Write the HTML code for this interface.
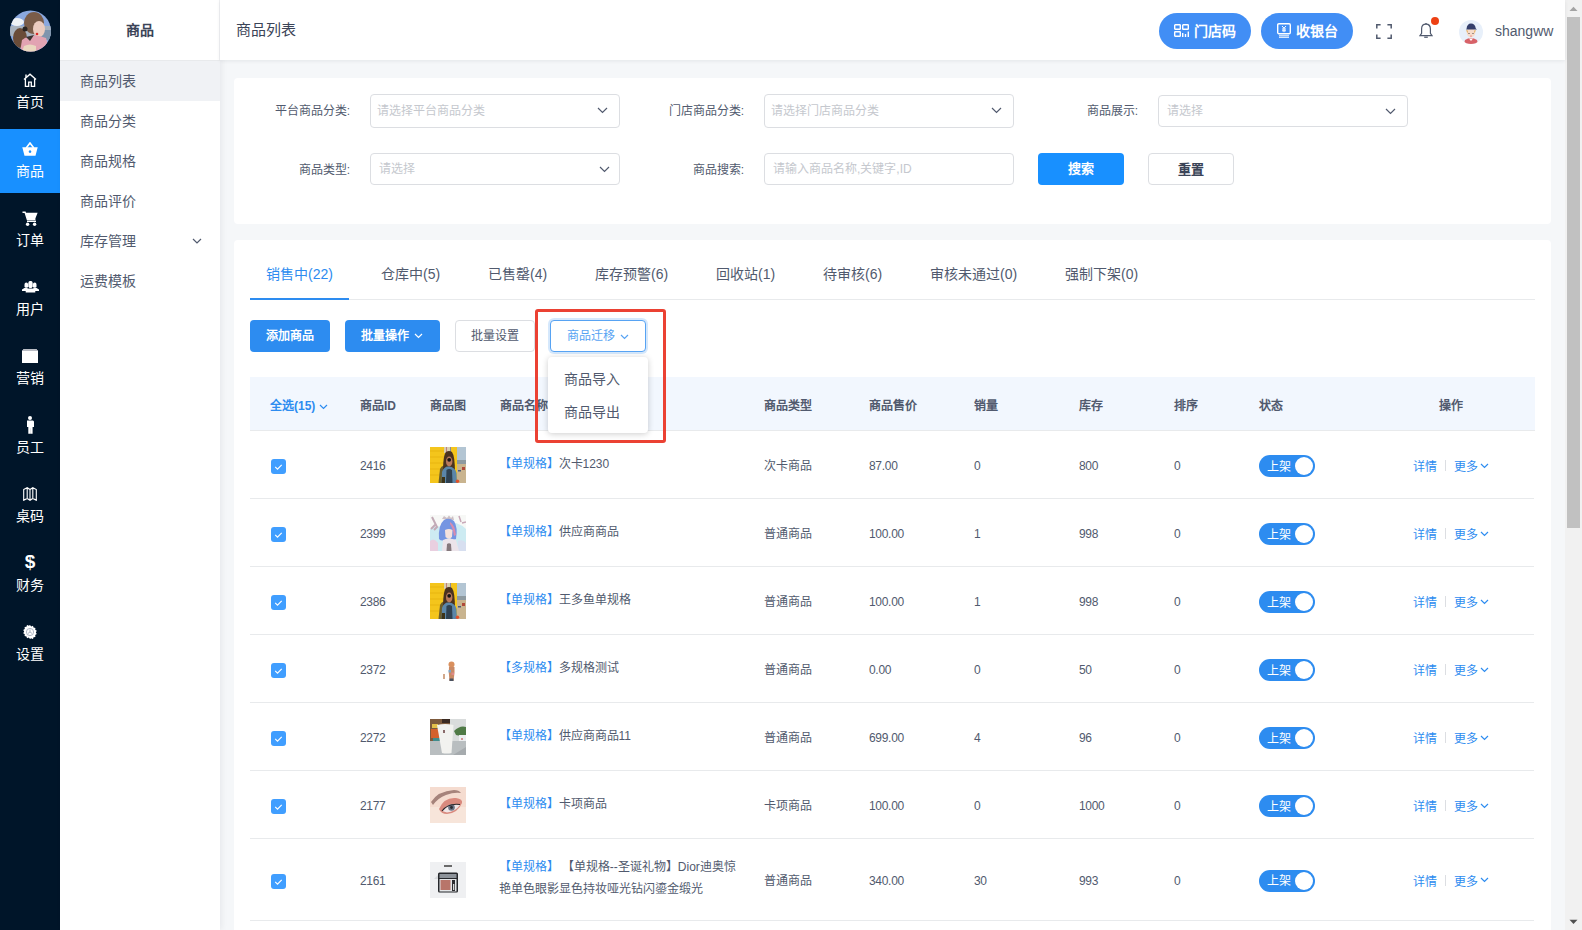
<!DOCTYPE html><html lang="zh-CN"><head><meta charset="utf-8"><style>
*{margin:0;padding:0;box-sizing:border-box}
html,body{width:1582px;height:930px;overflow:hidden;background:#f5f7f9}
body{font-family:"Liberation Sans",sans-serif;font-size:12px;color:#515a6e;position:relative}
.a{position:absolute}
.t{position:absolute;white-space:nowrap}
#side1{left:0;top:0;width:60px;height:930px;background:#001529}
.mtx{position:absolute;left:0;width:60px;text-align:center;color:#fff;font-size:14px;line-height:20px;height:20px}
#side2{left:60px;top:0;width:160px;height:930px;background:#fff;box-shadow:2px 0 6px rgba(0,21,41,.06);z-index:2}
.s2it{position:absolute;left:0;width:160px;height:40px;line-height:40px;padding-left:20px;font-size:14px;color:#515a6e}
#header{left:220px;top:0;width:1345px;height:60px;background:#fff;box-shadow:0 1px 4px rgba(0,21,41,.08);z-index:3}
.card{position:absolute;background:#fff;border-radius:4px}
.lbl{position:absolute;font-size:12px;color:#515a6e;line-height:16px;white-space:nowrap}
.sel{position:absolute;border:1px solid #dcdee2;border-radius:4px;background:#fff}
.ph{position:absolute;font-size:12px;color:#c5c8ce;line-height:16px;white-space:nowrap}
.tab{position:absolute;font-size:14px;line-height:20px;color:#515a6e;white-space:nowrap}
.cell{position:absolute;font-size:12px;line-height:16px;color:#515a6e;white-space:nowrap}
.hcell{position:absolute;font-size:12px;line-height:16px;color:#515a6e;font-weight:bold;white-space:nowrap}
</style></head><body>
<div id="side1" class="a">
<svg class="a" style="left:10px;top:10px" width="41" height="42" viewBox="0 0 41 42">
<defs><clipPath id="av"><circle cx="20.5" cy="21" r="20.5"/></clipPath></defs>
<g clip-path="url(#av)">
<rect width="41" height="42" fill="#8aa8de"/>
<ellipse cx="7" cy="12" rx="7" ry="4" fill="#eef2f6"/>
<rect x="0" y="16" width="41" height="10" fill="#a9b3bf"/>
<rect x="30" y="20" width="11" height="10" fill="#7f95ad"/>
<ellipse cx="24" cy="13" rx="10" ry="11" fill="#7a5c48"/>
<ellipse cx="29" cy="19" rx="6" ry="8" fill="#ecccbf"/>
<circle cx="27" cy="24" r="1.3" fill="#d82a2a"/>
<ellipse cx="10" cy="28" rx="7" ry="10" fill="#6a4c38"/>
<circle cx="15" cy="19" r="2.5" fill="#2a2522"/>
<path d="M12 30 Q22 22 36 28 L40 42 H10z" fill="#e2a3b2"/>
<path d="M14 36 Q20 33 26 36 L26 42 H12z" fill="#ead8c0"/>
<path d="M16 27 L24 25 L20 31z" fill="#3a3430"/>
</g></svg>
<div class="a" style="left:0;top:129px;width:60px;height:64px;background:#1890ff"></div>
<div class="mtx" style="top:91.5px">首页</div>
<div class="mtx" style="top:160.5px">商品</div>
<div class="mtx" style="top:229.5px">订单</div>
<div class="mtx" style="top:298.5px">用户</div>
<div class="mtx" style="top:367.5px">营销</div>
<div class="mtx" style="top:436.5px">员工</div>
<div class="mtx" style="top:505.5px">桌码</div>
<div class="mtx" style="top:574.5px">财务</div>
<div class="mtx" style="top:643.5px">设置</div>
<svg class="a" style="left:23px;top:73px" width="14" height="14" viewBox="0 0 14 14"><path d="M1 6.6 L7 1.2 L13 6.6" fill="none" stroke="#fff" stroke-width="1.4"/><path d="M2.3 1.6h1.4v3.2h-1.4z" fill="#fff"/><path d="M2.4 6v7.3h3.3V9.2h2.6v4.1h3.3V6" fill="none" stroke="#fff" stroke-width="1.3"/></svg>
<svg class="a" style="left:22px;top:142px" width="16" height="14" viewBox="0 0 16 14"><path d="M4.2 6 L8 1 L11.8 6" fill="none" stroke="#fff" stroke-width="1.6"/><path d="M0.3 5.2h15.4l-2.2 8.6h-11z M8 8.3a1.3 1.3 0 1 0 0.01 0z" fill="#fff" fill-rule="evenodd"/></svg>
<svg class="a" style="left:22px;top:211px" width="16" height="15" viewBox="0 0 16 15"><path d="M0.5 1.3h2.6l2.3 7.2h8" fill="none" stroke="#fff" stroke-width="1.4"/><path d="M3.6 1.8h12l-2.6 6.6h-7.6z" fill="#fff"/><path d="M5 10.3h9" stroke="#fff" stroke-width="1.4"/><circle cx="5.6" cy="13.2" r="1.7" fill="#fff"/><circle cx="12.6" cy="13.2" r="1.7" fill="#fff"/></svg>
<svg class="a" style="left:22px;top:281px" width="17" height="12" viewBox="0 0 17 12"><path d="M2.5 3.5a1.8 2 0 0 1 3.6 0v2.6l-1 .7h-1.6l-1-.7z M0 10h7.5v-1.5l-2.4-1.5h-2.7l-2.4 1.5z" fill="#fff"/><path d="M10.9 3.5a1.8 2 0 0 1 3.6 0v2.6l-1 .7h-1.6l-1-.7z M9.5 10h7.5v-1.5l-2.4-1.5h-2.7l-2.4 1.5z" fill="#fff"/><path d="M6.3 2.2a2.2 2.3 0 0 1 4.4 0v3.6l-1.2 1.1h-2l-1.2-1.1z M3.7 11.5h9.6v-2.2l-3-1.7h-3.6l-3 1.7z" fill="#fff"/></svg>
<svg class="a" style="left:22px;top:349px" width="16" height="14" viewBox="0 0 16 14"><path d="M1.5 0.3h13l1.5 1.8v11.9h-16v-11.9z" fill="#fff"/><path d="M1.5 0.3h13l1.5 1.8h-16z" fill="#b9bcc4"/></svg>
<svg class="a" style="left:25px;top:416px" width="10" height="18" viewBox="0 0 10 18"><circle cx="5" cy="2" r="2" fill="#fff"/><path d="M2 4.6h6l1 1v5.4h-1.4v6.8h-2.1v-5.5h-0.1v5.5h-2.1v-6.8h-1.3v-5.4z" fill="#fff"/></svg>
<svg class="a" style="left:23px;top:487px" width="14" height="14" viewBox="0 0 14 14"><path d="M0.7 2.5l3.5-1.8 2.8 1.8 2.8-1.8 3.5 1.8v10.8l-3.5-1.8-2.8 1.8-2.8-1.8-3.5 1.8z M4.2 0.7v10.8 M7 2.5v10.8 M9.8 0.7v10.8" fill="none" stroke="#fff" stroke-width="1.1"/></svg>
<svg class="a" style="left:23px;top:625px" width="14" height="14" viewBox="0 0 14 14"><path d="M7 0l1.2 1.5 1.8-.8.5 1.9 1.9.3-.2 1.9 1.6 1-1 1.6 1 1.6-1.6 1 .2 1.9-1.9.3-.5 1.9-1.8-.8L7 14l-1.2-1.5-1.8.8-.5-1.9-1.9-.3.2-1.9-1.6-1 1-1.6-1-1.6 1.6-1-.2-1.9 1.9-.3.5-1.9 1.8.8z" fill="#fff"/><circle cx="7" cy="7" r="3.6" fill="none" stroke="#9aa3b5" stroke-width="0.8"/><path d="M7 4.5V7l2 1.4M7 7l-2 1.4" fill="none" stroke="#9aa3b5" stroke-width="0.8"/></svg>
<div class="a" style="left:22px;top:551px;width:16px;height:22px;color:#fff;font-size:19px;font-weight:bold;line-height:22px;text-align:center">$</div>
</div>
<div id="side2" class="a">
<div class="a" style="left:0;top:0;width:159px;height:60px;line-height:60px;text-align:center;font-size:14px;font-weight:bold;color:#3b4457">商品</div>
<div class="a" style="left:0;top:60px;width:160px;height:1px;background:#e8eaec"></div>
<div class="a" style="left:159px;top:0;width:1px;height:60px;background:#f0f1f3"></div>
<div class="s2it" style="top:61px;background:#f0f2f5;">商品列表</div>
<div class="s2it" style="top:101px;">商品分类</div>
<div class="s2it" style="top:141px;">商品规格</div>
<div class="s2it" style="top:181px;">商品评价</div>
<div class="s2it" style="top:221px;">库存管理</div>
<div class="s2it" style="top:261px;">运费模板</div>
<svg class="a" style="left:132px;top:238px" width="10" height="6" viewBox="0 0 10 6"><path d="M1 1l4 4 4-4" fill="none" stroke="#515a6e" stroke-width="1.2"/></svg>
</div>
<div id="header" class="a">
<div class="t" style="left:16px;top:20px;font-size:15px;line-height:20px;color:#3b4457">商品列表</div>
</div>
<div class="a" style="left:0;top:0;width:0;height:0;z-index:4">
<div class="a" style="left:1159px;top:13px;width:92px;height:36px;border-radius:18px;background:#418ef5"></div>
<div class="a" style="left:1261px;top:13px;width:92px;height:36px;border-radius:18px;background:#418ef5"></div>
<svg class="a" style="left:1174px;top:24px" width="15" height="13" viewBox="0 0 15 13"><rect x="0.7" y="0.7" width="5.6" height="4.6" rx="0.6" fill="none" stroke="#fff" stroke-width="1.4"/><rect x="8.7" y="0.7" width="5.6" height="4.6" rx="0.6" fill="none" stroke="#fff" stroke-width="1.4"/><rect x="0.7" y="7.7" width="5.6" height="4.6" rx="0.6" fill="none" stroke="#fff" stroke-width="1.4"/><path d="M8.7 13V9M11.5 13V10M14.3 13V7.5" stroke="#fff" stroke-width="1.4"/></svg>
<div class="t" style="left:1194px;top:21px;font-size:14px;line-height:20px;color:#fff;font-weight:bold">门店码</div>
<svg class="a" style="left:1277px;top:23px" width="14" height="15" viewBox="0 0 14 15"><rect x="0.7" y="0.7" width="12.6" height="10" rx="1.2" fill="none" stroke="#fff" stroke-width="1.4"/><path d="M2 12.8h10M2 14.3h10" stroke="#fff" stroke-width="1"/><path d="M5 3l2 2.2 2-2.2M7 5.2v4M5 6h4M5 7.8h4" fill="none" stroke="#fff" stroke-width="1"/></svg>
<div class="t" style="left:1296px;top:21px;font-size:14px;line-height:20px;color:#fff;font-weight:bold">收银台</div>
<svg class="a" style="left:1376px;top:24px" width="16" height="15" viewBox="0 0 16 15"><path d="M0.8 4.5V0.8h3.8M11.4 0.8h3.8v3.7M15.2 10.5v3.7h-3.8M4.6 14.2H0.8v-3.7" fill="none" stroke="#515a6e" stroke-width="1.5"/></svg>
<svg class="a" style="left:1419px;top:23px" width="14" height="16" viewBox="0 0 14 16"><path d="M7 1.2c-2.8 0-4.4 2.2-4.4 4.8v4.4L1 12.6h12l-1.6-2.2V6c0-2.6-1.6-4.8-4.4-4.8z" fill="none" stroke="#515a6e" stroke-width="1.2"/><path d="M5.2 14.2h3.6" stroke="#515a6e" stroke-width="1.3"/><path d="M6.3 0.6h1.4" stroke="#515a6e" stroke-width="1.2"/></svg>
<div class="a" style="left:1431px;top:17px;width:8px;height:8px;border-radius:50%;background:#ed4014"></div>
<svg class="a" style="left:1459px;top:20px" width="24" height="24" viewBox="0 0 24 24">
<defs><clipPath id="av2"><circle cx="12" cy="12" r="12"/></clipPath></defs>
<g clip-path="url(#av2)">
<rect width="24" height="24" fill="#e8f0fa"/>
<path d="M6 20 Q12 16 18 20 L19 24 H5z" fill="#d86268"/>
<path d="M10 18.5 L12 21 L14 18.5z" fill="#fff"/>
<ellipse cx="12" cy="12.5" rx="4.3" ry="5" fill="#f7dccb"/>
<path d="M7.5 9 Q8 3.5 12 3.5 Q16 3.5 16.8 8.5 L18 9.5 L7 9.5z" fill="#343e6b"/>
<path d="M7.7 10 L8.7 12.5 M16.3 10 L15.3 12.5" stroke="#e8b870" stroke-width="1.2"/>
<circle cx="10" cy="13.5" r="0.6" fill="#333"/><circle cx="14" cy="13.5" r="0.6" fill="#333"/>
<ellipse cx="12" cy="16" rx="1" ry="0.6" fill="#e57373"/>
</g></svg>
<div class="t" style="left:1495px;top:22px;font-size:14px;line-height:18px;color:#515a6e">shangww</div>
</div>
<div class="a" style="left:1565px;top:0;width:17px;height:930px;background:#f1f1f1">
<div class="a" style="left:2px;top:17px;width:13px;height:511px;background:#c1c1c1"></div>
<svg class="a" style="left:4px;top:6px" width="9" height="6" viewBox="0 0 9 6"><path d="M0.5 5L4.5 0.8 8.5 5z" fill="#a3a3a3"/></svg>
<svg class="a" style="left:4px;top:918.5px" width="9" height="6" viewBox="0 0 9 6"><path d="M0.5 0.8L4.5 5 8.5 0.8z" fill="#505050"/></svg>
</div>
<div class="card" style="left:234px;top:78px;width:1317px;height:146px"></div>
<div class="lbl" style="right:1232px;top:102.5px">平台商品分类:</div>
<div class="sel" style="left:370px;top:94px;width:250px;height:34px"></div>
<div class="ph" style="left:377px;top:103.0px">请选择平台商品分类</div>
<svg class="a" style="left:597px;top:106.5px" width="11" height="7" viewBox="0 0 11 7"><path d="M1 1l4.5 4.5L10 1" fill="none" stroke="#515a6e" stroke-width="1.2"/></svg>
<div class="lbl" style="right:838px;top:102.5px">门店商品分类:</div>
<div class="sel" style="left:764px;top:94px;width:250px;height:34px"></div>
<div class="ph" style="left:771px;top:103.0px">请选择门店商品分类</div>
<svg class="a" style="left:991px;top:106.5px" width="11" height="7" viewBox="0 0 11 7"><path d="M1 1l4.5 4.5L10 1" fill="none" stroke="#515a6e" stroke-width="1.2"/></svg>
<div class="lbl" style="right:444px;top:102.5px">商品展示:</div>
<div class="sel" style="left:1158px;top:95px;width:250px;height:32px"></div>
<div class="ph" style="left:1167px;top:103.0px">请选择</div>
<svg class="a" style="left:1385px;top:107.5px" width="11" height="7" viewBox="0 0 11 7"><path d="M1 1l4.5 4.5L10 1" fill="none" stroke="#515a6e" stroke-width="1.2"/></svg>
<div class="lbl" style="right:1232px;top:161.5px">商品类型:</div>
<div class="sel" style="left:370px;top:153px;width:250px;height:32px"></div>
<div class="ph" style="left:379px;top:161.0px">请选择</div>
<svg class="a" style="left:598.5px;top:165.5px" width="11" height="7" viewBox="0 0 11 7"><path d="M1 1l4.5 4.5L10 1" fill="none" stroke="#515a6e" stroke-width="1.2"/></svg>
<div class="lbl" style="right:838px;top:161.5px">商品搜索:</div>
<div class="sel" style="left:764px;top:153px;width:250px;height:32px"></div>
<div class="ph" style="left:773px;top:161.0px">请输入商品名称,关键字,ID</div>
<div class="a" style="left:1038px;top:153px;width:86px;height:32px;border-radius:4px;background:#1890ff"></div>
<div class="t" style="left:1038px;top:161px;width:86px;text-align:center;font-size:13px;line-height:16px;color:#fff;font-weight:bold">搜索</div>
<div class="a" style="left:1148px;top:153px;width:86px;height:32px;border-radius:4px;border:1px solid #dcdee2;background:#fff"></div>
<div class="t" style="left:1148px;top:162px;width:86px;text-align:center;font-size:13px;line-height:16px;color:#3b4457;font-weight:bold">重置</div>
<div class="card" style="left:234px;top:240px;width:1317px;height:720px"></div>
<div class="a" style="left:250px;top:299px;width:1285px;height:1px;background:#e8eaec"></div>
<div class="tab" style="left:266px;top:263.6px;color:#2d8cf0">销售中(22)</div>
<div class="tab" style="left:381px;top:263.6px;color:#515a6e">仓库中(5)</div>
<div class="tab" style="left:488px;top:263.6px;color:#515a6e">已售罄(4)</div>
<div class="tab" style="left:595px;top:263.6px;color:#515a6e">库存预警(6)</div>
<div class="tab" style="left:716px;top:263.6px;color:#515a6e">回收站(1)</div>
<div class="tab" style="left:823px;top:263.6px;color:#515a6e">待审核(6)</div>
<div class="tab" style="left:930px;top:263.6px;color:#515a6e">审核未通过(0)</div>
<div class="tab" style="left:1065px;top:263.6px;color:#515a6e">强制下架(0)</div>
<div class="a" style="left:250px;top:298px;width:99px;height:2px;background:#2d8cf0"></div>
<div class="a" style="left:250px;top:320px;width:80px;height:32px;border-radius:4px;background:#2d8cf0"></div>
<div class="t" style="left:250px;top:328px;width:80px;text-align:center;font-size:12px;line-height:16px;color:#fff;font-weight:bold">添加商品</div>
<div class="a" style="left:345px;top:320px;width:95px;height:32px;border-radius:4px;background:#2d8cf0"></div>
<div class="t" style="left:361px;top:328px;font-size:12px;line-height:16px;color:#fff;font-weight:bold">批量操作</div>
<svg class="a" style="left:414.0px;top:333.0px" width="9" height="6" viewBox="0 0 9 6"><path d="M1 1l3.5 3.5L8 1" fill="none" stroke="#fff" stroke-width="1.2"/></svg>
<div class="a" style="left:455px;top:320px;width:80px;height:32px;border-radius:4px;border:1px solid #dcdee2;background:#fff"></div>
<div class="t" style="left:455px;top:328px;width:80px;text-align:center;font-size:12px;line-height:16px;color:#515a6e">批量设置</div>
<div class="a" style="left:550px;top:320px;width:96px;height:32px;border-radius:4px;border:1px solid #57a3f3;background:#fff;box-shadow:0 0 0 2px rgba(45,140,240,.2)"></div>
<div class="t" style="left:567px;top:328px;font-size:12px;line-height:16px;color:#57a3f3">商品迁移</div>
<svg class="a" style="left:620.0px;top:333.5px" width="9" height="6" viewBox="0 0 9 6"><path d="M1 1l3.5 3.5L8 1" fill="none" stroke="#57a3f3" stroke-width="1.2"/></svg>
<div class="a" style="left:250px;top:377px;width:1285px;height:53px;background:#f2f7fe"></div>
<div class="a" style="left:250px;top:430px;width:1285px;height:1px;background:#e8eaec"></div>
<div class="hcell" style="left:270px;top:397.5px;color:#2d8cf0">全选(15)</div>
<svg class="a" style="left:319.0px;top:404.0px" width="9" height="6" viewBox="0 0 9 6"><path d="M1 1l3.5 3.5L8 1" fill="none" stroke="#2d8cf0" stroke-width="1.2"/></svg>
<div class="hcell" style="left:360px;top:397.5px">商品ID</div>
<div class="hcell" style="left:430px;top:397.5px">商品图</div>
<div class="hcell" style="left:500px;top:397.5px">商品名称</div>
<div class="hcell" style="left:764px;top:397.5px">商品类型</div>
<div class="hcell" style="left:869px;top:397.5px">商品售价</div>
<div class="hcell" style="left:974px;top:397.5px">销量</div>
<div class="hcell" style="left:1079px;top:397.5px">库存</div>
<div class="hcell" style="left:1174px;top:397.5px">排序</div>
<div class="hcell" style="left:1259px;top:397.5px">状态</div>
<div class="hcell" style="left:1439px;top:397.5px">操作</div>
<div class="a" style="left:250px;top:498px;width:1284px;height:1px;background:#e8eaec"></div>
<div class="a" style="left:271px;top:459.0px;width:15px;height:15px;border-radius:3px;background:#409eff"></div>
<svg class="a" style="left:271px;top:459.0px" width="15" height="15" viewBox="0 0 15 15"><path d="M4.2 7.9l2.3 2.2 4.2-4.2" fill="none" stroke="#fff" stroke-width="1.2"/></svg>
<div class="cell" style="left:360px;top:458.0px;letter-spacing:-0.3px">2416</div>
<svg class="a" style="left:430px;top:447px;width:36px;height:36px;overflow:hidden" width="36" height="36" viewBox="0 0 36 36">
<rect width="36" height="36" fill="#f4c51c"/>
<path d="M0 4h14M0 10h14M0 16h14M0 22h13M0 28h12" stroke="#e8b510" stroke-width="1.2"/>
<rect x="14" y="0" width="7" height="6" fill="#d8cfb0"/>
<rect x="16" y="0" width="1" height="6" fill="#c08080"/><rect x="20" y="0" width="1" height="6" fill="#8a8a9a"/>
<rect x="27" y="0" width="9" height="13" fill="#b3c5d3"/>
<rect x="27" y="13" width="9" height="4" fill="#8e9aa0"/>
<rect x="27" y="17" width="9" height="19" fill="#c9b48f"/>
<rect x="32" y="20" width="3" height="3" fill="#b04a3a"/>
<rect x="28" y="23" width="3" height="1.5" fill="#4a5a7a"/>
<path d="M8.5 36 L10 22 Q12 18 15 19 L15 36z" fill="#6b5d2a"/>
<path d="M13 26 Q13 8 16 5 Q19 3 22 5 Q25 9 25 26z" fill="#4a3320"/>
<ellipse cx="19.2" cy="14.5" rx="3.2" ry="5" fill="#b97a5c"/>
<circle cx="19.2" cy="12.8" r="1.9" fill="#151515"/>
<path d="M11.5 36 L12 25 Q14 19 19 19.5 Q25 20 26.5 26 L27 36z" fill="#5b86a8"/>
<path d="M16 36 L16.5 23 Q19 21 22 23 L22.5 36z" fill="#2f4150"/>
<path d="M11.5 36 L12 30 L15 30 L15 36z" fill="#3d3418"/>
<circle cx="27.5" cy="34.2" r="1.7" fill="#e0502a"/>
</svg>
<div class="cell" style="left:498.5px;top:456.0px"><span style="color:#2d8cf0">【单规格】</span>次卡1230</div>
<div class="cell" style="left:764px;top:458.0px">次卡商品</div>
<div class="cell" style="left:869px;top:458.0px;letter-spacing:-0.3px">87.00</div>
<div class="cell" style="left:974px;top:458.0px;letter-spacing:-0.3px">0</div>
<div class="cell" style="left:1079px;top:458.0px;letter-spacing:-0.3px">800</div>
<div class="cell" style="left:1174px;top:458.0px;letter-spacing:-0.3px">0</div>
<div class="a" style="left:1259px;top:455.0px;width:56px;height:22px;border-radius:11px;background:#2d8cf0"></div>
<div class="a" style="left:1295px;top:457.0px;width:18px;height:18px;border-radius:50%;background:#fff"></div>
<div class="cell" style="left:1267px;top:458.5px;color:#fff">上架</div>
<div class="cell" style="left:1413px;top:458.8px;color:#2d8cf0">详情</div>
<div class="a" style="left:1445px;top:460.0px;width:1px;height:11px;background:#dcdee2"></div>
<div class="cell" style="left:1454px;top:458.8px;color:#2d8cf0">更多</div>
<svg class="a" style="left:1480.0px;top:462.5px" width="9" height="6" viewBox="0 0 9 6"><path d="M1 1l3.5 3.5L8 1" fill="none" stroke="#2d8cf0" stroke-width="1.2"/></svg>
<div class="a" style="left:250px;top:566px;width:1284px;height:1px;background:#e8eaec"></div>
<div class="a" style="left:271px;top:527.0px;width:15px;height:15px;border-radius:3px;background:#409eff"></div>
<svg class="a" style="left:271px;top:527.0px" width="15" height="15" viewBox="0 0 15 15"><path d="M4.2 7.9l2.3 2.2 4.2-4.2" fill="none" stroke="#fff" stroke-width="1.2"/></svg>
<div class="cell" style="left:360px;top:526.0px;letter-spacing:-0.3px">2399</div>
<svg class="a" style="left:430px;top:515px;width:36px;height:36px;overflow:hidden" width="36" height="36" viewBox="0 0 36 36">
<rect width="36" height="36" fill="#f7f8f6"/>
<path d="M0 14 Q6 10 12 12 L26 8 Q32 10 36 14 V36 H0z" fill="#cdebf2"/>
<path d="M2 2 L7 12 L4 15 M6 9 L1 14" stroke="#c2aab6" stroke-width="2" fill="none"/>
<path d="M29 1 L31 7 M32 8 L36 7" stroke="#c8a8b8" stroke-width="1.5" fill="none"/>
<path d="M0 26 Q4 22 8 28 V36 H0z" fill="#e9cfe0"/>
<path d="M28 26 Q33 24 36 28 V36 H28z" fill="#d7dff0"/>
<path d="M12 4 L14 1 L17 3 L19 0.5 L21 3 L23 1 L24 5z" fill="#cdbfc5"/>
<path d="M9 24 Q8 10 14 5 Q19 2 24 6 Q28 12 26 24 Q22 26 20 23 L16 24 Q12 27 9 24z" fill="#7595e2"/>
<path d="M20 7 Q25 10 26 20 L24 21 Q23 13 20 9z" fill="#d98cae"/>
<path d="M15 15 Q19 13 22.5 15 L22 22 Q19 25 15.5 22z" fill="#f6e2dc"/>
<path d="M12 36 L13 25 Q19 22 26 25 L29 36z" fill="#ece4ea"/>
<path d="M16.5 36 L17 29 Q19 27.5 21 29 L21.5 36z" fill="#85787c"/>
</svg>
<div class="cell" style="left:498.5px;top:524.0px"><span style="color:#2d8cf0">【单规格】</span>供应商商品</div>
<div class="cell" style="left:764px;top:526.0px">普通商品</div>
<div class="cell" style="left:869px;top:526.0px;letter-spacing:-0.3px">100.00</div>
<div class="cell" style="left:974px;top:526.0px;letter-spacing:-0.3px">1</div>
<div class="cell" style="left:1079px;top:526.0px;letter-spacing:-0.3px">998</div>
<div class="cell" style="left:1174px;top:526.0px;letter-spacing:-0.3px">0</div>
<div class="a" style="left:1259px;top:523.0px;width:56px;height:22px;border-radius:11px;background:#2d8cf0"></div>
<div class="a" style="left:1295px;top:525.0px;width:18px;height:18px;border-radius:50%;background:#fff"></div>
<div class="cell" style="left:1267px;top:526.5px;color:#fff">上架</div>
<div class="cell" style="left:1413px;top:526.8px;color:#2d8cf0">详情</div>
<div class="a" style="left:1445px;top:528.0px;width:1px;height:11px;background:#dcdee2"></div>
<div class="cell" style="left:1454px;top:526.8px;color:#2d8cf0">更多</div>
<svg class="a" style="left:1480.0px;top:530.5px" width="9" height="6" viewBox="0 0 9 6"><path d="M1 1l3.5 3.5L8 1" fill="none" stroke="#2d8cf0" stroke-width="1.2"/></svg>
<div class="a" style="left:250px;top:634px;width:1284px;height:1px;background:#e8eaec"></div>
<div class="a" style="left:271px;top:595.0px;width:15px;height:15px;border-radius:3px;background:#409eff"></div>
<svg class="a" style="left:271px;top:595.0px" width="15" height="15" viewBox="0 0 15 15"><path d="M4.2 7.9l2.3 2.2 4.2-4.2" fill="none" stroke="#fff" stroke-width="1.2"/></svg>
<div class="cell" style="left:360px;top:594.0px;letter-spacing:-0.3px">2386</div>
<svg class="a" style="left:430px;top:583px;width:36px;height:36px;overflow:hidden" width="36" height="36" viewBox="0 0 36 36">
<rect width="36" height="36" fill="#f4c51c"/>
<path d="M0 4h14M0 10h14M0 16h14M0 22h13M0 28h12" stroke="#e8b510" stroke-width="1.2"/>
<rect x="14" y="0" width="7" height="6" fill="#d8cfb0"/>
<rect x="16" y="0" width="1" height="6" fill="#c08080"/><rect x="20" y="0" width="1" height="6" fill="#8a8a9a"/>
<rect x="27" y="0" width="9" height="13" fill="#b3c5d3"/>
<rect x="27" y="13" width="9" height="4" fill="#8e9aa0"/>
<rect x="27" y="17" width="9" height="19" fill="#c9b48f"/>
<rect x="32" y="20" width="3" height="3" fill="#b04a3a"/>
<rect x="28" y="23" width="3" height="1.5" fill="#4a5a7a"/>
<path d="M8.5 36 L10 22 Q12 18 15 19 L15 36z" fill="#6b5d2a"/>
<path d="M13 26 Q13 8 16 5 Q19 3 22 5 Q25 9 25 26z" fill="#4a3320"/>
<ellipse cx="19.2" cy="14.5" rx="3.2" ry="5" fill="#b97a5c"/>
<circle cx="19.2" cy="12.8" r="1.9" fill="#151515"/>
<path d="M11.5 36 L12 25 Q14 19 19 19.5 Q25 20 26.5 26 L27 36z" fill="#5b86a8"/>
<path d="M16 36 L16.5 23 Q19 21 22 23 L22.5 36z" fill="#2f4150"/>
<path d="M11.5 36 L12 30 L15 30 L15 36z" fill="#3d3418"/>
<circle cx="27.5" cy="34.2" r="1.7" fill="#e0502a"/>
</svg>
<div class="cell" style="left:498.5px;top:592.0px"><span style="color:#2d8cf0">【单规格】</span>王多鱼单规格</div>
<div class="cell" style="left:764px;top:594.0px">普通商品</div>
<div class="cell" style="left:869px;top:594.0px;letter-spacing:-0.3px">100.00</div>
<div class="cell" style="left:974px;top:594.0px;letter-spacing:-0.3px">1</div>
<div class="cell" style="left:1079px;top:594.0px;letter-spacing:-0.3px">998</div>
<div class="cell" style="left:1174px;top:594.0px;letter-spacing:-0.3px">0</div>
<div class="a" style="left:1259px;top:591.0px;width:56px;height:22px;border-radius:11px;background:#2d8cf0"></div>
<div class="a" style="left:1295px;top:593.0px;width:18px;height:18px;border-radius:50%;background:#fff"></div>
<div class="cell" style="left:1267px;top:594.5px;color:#fff">上架</div>
<div class="cell" style="left:1413px;top:594.8px;color:#2d8cf0">详情</div>
<div class="a" style="left:1445px;top:596.0px;width:1px;height:11px;background:#dcdee2"></div>
<div class="cell" style="left:1454px;top:594.8px;color:#2d8cf0">更多</div>
<svg class="a" style="left:1480.0px;top:598.5px" width="9" height="6" viewBox="0 0 9 6"><path d="M1 1l3.5 3.5L8 1" fill="none" stroke="#2d8cf0" stroke-width="1.2"/></svg>
<div class="a" style="left:250px;top:702px;width:1284px;height:1px;background:#e8eaec"></div>
<div class="a" style="left:271px;top:663.0px;width:15px;height:15px;border-radius:3px;background:#409eff"></div>
<svg class="a" style="left:271px;top:663.0px" width="15" height="15" viewBox="0 0 15 15"><path d="M4.2 7.9l2.3 2.2 4.2-4.2" fill="none" stroke="#fff" stroke-width="1.2"/></svg>
<div class="cell" style="left:360px;top:662.0px;letter-spacing:-0.3px">2372</div>
<svg class="a" style="left:430px;top:651px;width:36px;height:36px;overflow:hidden" width="36" height="36" viewBox="0 0 36 36">
<rect width="36" height="36" fill="#fff"/>
<circle cx="21.5" cy="13.5" r="3" fill="#d9905e"/>
<path d="M19 16 L24.5 16 L24.5 22 L23.5 30 L19.5 30 L18.8 22z" fill="#c98a66"/>
<rect x="18.5" y="19" width="2.5" height="2.5" fill="#7ea6c9"/>
<rect x="21.5" y="21.5" width="2.5" height="2.5" fill="#e08a8a"/>
<rect x="19.5" y="27.5" width="4" height="2.5" fill="#4a5260"/>
<rect x="13.2" y="23" width="1.6" height="5" fill="#c7936f"/>
</svg>
<div class="cell" style="left:498.5px;top:660.0px"><span style="color:#2d8cf0">【多规格】</span>多规格测试</div>
<div class="cell" style="left:764px;top:662.0px">普通商品</div>
<div class="cell" style="left:869px;top:662.0px;letter-spacing:-0.3px">0.00</div>
<div class="cell" style="left:974px;top:662.0px;letter-spacing:-0.3px">0</div>
<div class="cell" style="left:1079px;top:662.0px;letter-spacing:-0.3px">50</div>
<div class="cell" style="left:1174px;top:662.0px;letter-spacing:-0.3px">0</div>
<div class="a" style="left:1259px;top:659.0px;width:56px;height:22px;border-radius:11px;background:#2d8cf0"></div>
<div class="a" style="left:1295px;top:661.0px;width:18px;height:18px;border-radius:50%;background:#fff"></div>
<div class="cell" style="left:1267px;top:662.5px;color:#fff">上架</div>
<div class="cell" style="left:1413px;top:662.8px;color:#2d8cf0">详情</div>
<div class="a" style="left:1445px;top:664.0px;width:1px;height:11px;background:#dcdee2"></div>
<div class="cell" style="left:1454px;top:662.8px;color:#2d8cf0">更多</div>
<svg class="a" style="left:1480.0px;top:666.5px" width="9" height="6" viewBox="0 0 9 6"><path d="M1 1l3.5 3.5L8 1" fill="none" stroke="#2d8cf0" stroke-width="1.2"/></svg>
<div class="a" style="left:250px;top:770px;width:1284px;height:1px;background:#e8eaec"></div>
<div class="a" style="left:271px;top:731.0px;width:15px;height:15px;border-radius:3px;background:#409eff"></div>
<svg class="a" style="left:271px;top:731.0px" width="15" height="15" viewBox="0 0 15 15"><path d="M4.2 7.9l2.3 2.2 4.2-4.2" fill="none" stroke="#fff" stroke-width="1.2"/></svg>
<div class="cell" style="left:360px;top:730.0px;letter-spacing:-0.3px">2272</div>
<svg class="a" style="left:430px;top:719px;width:36px;height:36px;overflow:hidden" width="36" height="36" viewBox="0 0 36 36">
<rect width="36" height="36" fill="#d9dcdc"/>
<rect x="0" y="0" width="20" height="22" fill="#7d5a3c"/>
<rect x="12" y="0" width="8" height="4" fill="#3a2a22"/>
<rect x="2" y="5" width="6" height="4" fill="#e3c04a"/>
<rect x="1" y="10" width="10" height="9" fill="#d4612c"/>
<rect x="3" y="19" width="8" height="3" fill="#3f8c8c"/>
<path d="M24 12 Q30 6 36 8 V16 Q30 17 26 16z" fill="#4f7a46"/>
<rect x="29" y="16" width="7" height="8" fill="#eceef0"/>
<circle cx="32" cy="20" r="1" fill="#c77"/>
<rect x="0" y="22" width="36" height="14" fill="#b9bec0"/>
<path d="M23 36 L36 28 V36z" fill="#a6abae"/>
<path d="M7 6 Q15 4 23.5 6 L21.5 34 Q17 35 12 34z" fill="#f2f2ef"/>
<rect x="13" y="11" width="2" height="3" fill="#8a6a6a"/>
</svg>
<div class="cell" style="left:498.5px;top:728.0px"><span style="color:#2d8cf0">【单规格】</span>供应商商品11</div>
<div class="cell" style="left:764px;top:730.0px">普通商品</div>
<div class="cell" style="left:869px;top:730.0px;letter-spacing:-0.3px">699.00</div>
<div class="cell" style="left:974px;top:730.0px;letter-spacing:-0.3px">4</div>
<div class="cell" style="left:1079px;top:730.0px;letter-spacing:-0.3px">96</div>
<div class="cell" style="left:1174px;top:730.0px;letter-spacing:-0.3px">0</div>
<div class="a" style="left:1259px;top:727.0px;width:56px;height:22px;border-radius:11px;background:#2d8cf0"></div>
<div class="a" style="left:1295px;top:729.0px;width:18px;height:18px;border-radius:50%;background:#fff"></div>
<div class="cell" style="left:1267px;top:730.5px;color:#fff">上架</div>
<div class="cell" style="left:1413px;top:730.8px;color:#2d8cf0">详情</div>
<div class="a" style="left:1445px;top:732.0px;width:1px;height:11px;background:#dcdee2"></div>
<div class="cell" style="left:1454px;top:730.8px;color:#2d8cf0">更多</div>
<svg class="a" style="left:1480.0px;top:734.5px" width="9" height="6" viewBox="0 0 9 6"><path d="M1 1l3.5 3.5L8 1" fill="none" stroke="#2d8cf0" stroke-width="1.2"/></svg>
<div class="a" style="left:250px;top:838px;width:1284px;height:1px;background:#e8eaec"></div>
<div class="a" style="left:271px;top:799.0px;width:15px;height:15px;border-radius:3px;background:#409eff"></div>
<svg class="a" style="left:271px;top:799.0px" width="15" height="15" viewBox="0 0 15 15"><path d="M4.2 7.9l2.3 2.2 4.2-4.2" fill="none" stroke="#fff" stroke-width="1.2"/></svg>
<div class="cell" style="left:360px;top:798.0px;letter-spacing:-0.3px">2177</div>
<svg class="a" style="left:430px;top:787px;width:36px;height:36px;overflow:hidden" width="36" height="36" viewBox="0 0 36 36">
<rect width="36" height="36" fill="#f5dcd0"/>
<rect x="0" y="20" width="36" height="16" fill="#f7e5da"/>
<path d="M1 15 Q8 4 24 3 Q29 3 31 6 Q24 5 16 8 Q8 11 3 18z" fill="#a6837b"/>
<path d="M9 22 Q14 10 26 11 Q33 12 32 16 Q28 26 17 27 Q11 27 9 22z" fill="#d98a7e"/>
<path d="M12 24 Q16 17 25 17 Q29 17 30 18 Q25 25 17 25.5z" fill="#f0e6e6"/>
<circle cx="21.5" cy="20.5" r="3.3" fill="#6a7385"/>
<circle cx="21.5" cy="20.5" r="1.4" fill="#2a2a30"/>
<path d="M12 24 Q18 16 30 17.5" stroke="#2a2326" stroke-width="1.2" fill="none"/>
</svg>
<div class="cell" style="left:498.5px;top:796.0px"><span style="color:#2d8cf0">【单规格】</span>卡项商品</div>
<div class="cell" style="left:764px;top:798.0px">卡项商品</div>
<div class="cell" style="left:869px;top:798.0px;letter-spacing:-0.3px">100.00</div>
<div class="cell" style="left:974px;top:798.0px;letter-spacing:-0.3px">0</div>
<div class="cell" style="left:1079px;top:798.0px;letter-spacing:-0.3px">1000</div>
<div class="cell" style="left:1174px;top:798.0px;letter-spacing:-0.3px">0</div>
<div class="a" style="left:1259px;top:795.0px;width:56px;height:22px;border-radius:11px;background:#2d8cf0"></div>
<div class="a" style="left:1295px;top:797.0px;width:18px;height:18px;border-radius:50%;background:#fff"></div>
<div class="cell" style="left:1267px;top:798.5px;color:#fff">上架</div>
<div class="cell" style="left:1413px;top:798.8px;color:#2d8cf0">详情</div>
<div class="a" style="left:1445px;top:800.0px;width:1px;height:11px;background:#dcdee2"></div>
<div class="cell" style="left:1454px;top:798.8px;color:#2d8cf0">更多</div>
<svg class="a" style="left:1480.0px;top:802.5px" width="9" height="6" viewBox="0 0 9 6"><path d="M1 1l3.5 3.5L8 1" fill="none" stroke="#2d8cf0" stroke-width="1.2"/></svg>
<div class="a" style="left:250px;top:920px;width:1284px;height:1px;background:#e8eaec"></div>
<div class="a" style="left:271px;top:873.8px;width:15px;height:15px;border-radius:3px;background:#409eff"></div>
<svg class="a" style="left:271px;top:873.8px" width="15" height="15" viewBox="0 0 15 15"><path d="M4.2 7.9l2.3 2.2 4.2-4.2" fill="none" stroke="#fff" stroke-width="1.2"/></svg>
<div class="cell" style="left:360px;top:872.8px;letter-spacing:-0.3px">2161</div>
<svg class="a" style="left:430px;top:862px;width:36px;height:36px;overflow:hidden" width="36" height="36" viewBox="0 0 36 36">
<rect width="36" height="36" fill="#eff0f2"/>
<rect x="14" y="3" width="8" height="2" fill="#6a6a6a"/>
<path d="M4 17 L10 11 L12 17z" fill="#d8dadd"/>
<rect x="8" y="10.5" width="20" height="20" rx="1.5" fill="#26282c"/>
<rect x="9.5" y="12" width="17" height="4" fill="#8d939a"/>
<rect x="9.5" y="17" width="17" height="12.5" fill="#e4e6e8"/>
<rect x="10.5" y="18" width="10" height="10" fill="#b8756a"/>
<rect x="22" y="18" width="3" height="11" fill="#2c2c30"/>
<rect x="23" y="22" width="1.3" height="6" fill="#d9d9d9"/>
</svg>
<div class="cell" style="left:498.5px;top:857.3px;line-height:21.5px"><span style="color:#2d8cf0">【单规格】</span> 【单规格--圣诞礼物】Dior迪奥惊<br>艳单色眼影显色持妆哑光钻闪鎏金缎光</div>
<div class="cell" style="left:764px;top:872.8px">普通商品</div>
<div class="cell" style="left:869px;top:872.8px;letter-spacing:-0.3px">340.00</div>
<div class="cell" style="left:974px;top:872.8px;letter-spacing:-0.3px">30</div>
<div class="cell" style="left:1079px;top:872.8px;letter-spacing:-0.3px">993</div>
<div class="cell" style="left:1174px;top:872.8px;letter-spacing:-0.3px">0</div>
<div class="a" style="left:1259px;top:869.8px;width:56px;height:22px;border-radius:11px;background:#2d8cf0"></div>
<div class="a" style="left:1295px;top:871.8px;width:18px;height:18px;border-radius:50%;background:#fff"></div>
<div class="cell" style="left:1267px;top:873.3px;color:#fff">上架</div>
<div class="cell" style="left:1413px;top:873.6px;color:#2d8cf0">详情</div>
<div class="a" style="left:1445px;top:874.8px;width:1px;height:11px;background:#dcdee2"></div>
<div class="cell" style="left:1454px;top:873.6px;color:#2d8cf0">更多</div>
<svg class="a" style="left:1480.0px;top:877.3px" width="9" height="6" viewBox="0 0 9 6"><path d="M1 1l3.5 3.5L8 1" fill="none" stroke="#2d8cf0" stroke-width="1.2"/></svg>
<div class="a" style="left:548px;top:357px;width:100px;height:76px;border-radius:4px;background:#fff;box-shadow:0 1px 6px rgba(0,0,0,.2)"></div>
<div class="t" style="left:564px;top:369px;font-size:14px;line-height:20px;color:#515a6e">商品导入</div>
<div class="t" style="left:564px;top:402px;font-size:14px;line-height:20px;color:#515a6e">商品导出</div>
<div class="a" style="left:535px;top:309px;width:131px;height:134px;border:3px solid #eb4133;border-radius:3px"></div>
</body></html>
